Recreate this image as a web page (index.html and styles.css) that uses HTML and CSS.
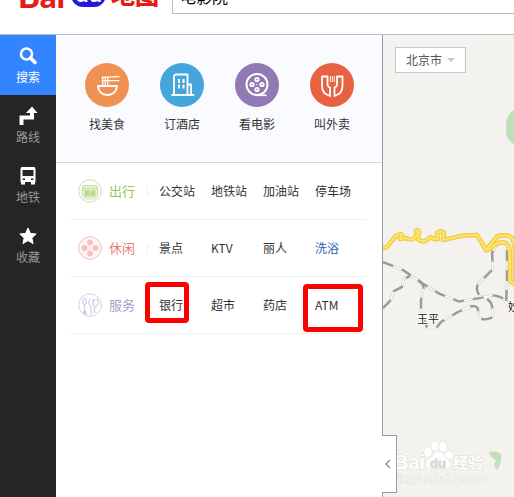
FILE: index.html
```html
<!DOCTYPE html>
<html lang="zh-CN">
<head>
<meta charset="utf-8">
<title>百度地图</title>
<link rel="stylesheet" href="styles.css">
</head>
<body>
<header class="header">
  <a class="logo" href="#" aria-label="百度地图">
    <span class="logo-latin">Bai</span>
    <span class="logo-paw">du</span>
    <span class="logo-cn">地图</span>
  </a>
  <input class="search" type="text" aria-label="搜索地点" value="电影院">
</header>
<div class="main">
  <nav class="sidebar">
    <a class="side-item active" href="#">
      <svg class="side-icon" viewBox="0 0 20 20"><circle cx="8.500" cy="8" r="5.500" fill="none" stroke="#fff" stroke-width="2.600"/><path d="M12.500 12L17 16.500" stroke="#fff" stroke-width="3.600" stroke-linecap="round"/></svg>
      <span>搜索</span>
    </a>
    <a class="side-item" href="#">
      <svg class="side-icon" viewBox="0 0 20 20"><path d="M3.500 19V11.500H14V6" fill="none" stroke="#fff" stroke-width="4"/><path d="M8 7L14 .500 19.500 7z" fill="#fff"/></svg>
      <span>路线</span>
    </a>
    <a class="side-item" href="#">
      <svg class="side-icon" viewBox="0 0 20 20"><path fill="#fff" fill-rule="evenodd" d="M4 1h12q1.500 0 1.500 2v13H2.500V3Q2.500 1 4 1zM4.500 4v6h11V4zM4.500 12.500v1.500h2.500v-1.500zM13 12.500v1.500h2.500v-1.500z"/><path d="M3 15h4v3.500H3zM13 15h4v3.500h-4z" fill="#fff"/></svg>
      <span>地铁</span>
    </a>
    <a class="side-item" href="#">
      <svg class="side-icon" viewBox="0 0 20 20"><path fill="#fff" stroke="#fff" stroke-linejoin="round" d="M10 2l2.400 5.400 5.800.600-4.400 3.900 1.300 5.700L10 14.600l-5.100 3 1.300-5.700L1.800 8l5.800-.600z"/></svg>
      <span>收藏</span>
    </a>
  </nav>
  <section class="panel">
    <div class="quick">
      <a class="quick-item" href="#">
        <svg class="quick-icon" viewBox="0 0 44 44"><circle cx="22" cy="22" r="22" fill="#f09053"/><g fill="none" stroke="#fff" stroke-width="1.600" stroke-linecap="round" stroke-linejoin="round"><path d="M13 23H32Q31 32 22.500 32 14 32 13 23z" stroke-width="2"/><path d="M17 14.300l17-.600M17 17.600h17M17.800 14v9M20.300 14v9M22.800 14v9" stroke-width="1.200"/></g></svg>
        <span>找美食</span>
      </a>
      <a class="quick-item" href="#">
        <svg class="quick-icon" viewBox="0 0 44 44"><circle cx="22" cy="22" r="22" fill="#46a5da"/><g fill="none" stroke="#fff" stroke-width="1.800" stroke-linejoin="round" stroke-linecap="round"><path d="M12 32H33.500M14 32V12.500L15.500 11.500H27.500V32M27.500 21.500H31V32"/></g><path d="M18 16h2v4h-2zM22.500 16h2v4h-2zM18 21.500h2v4h-2zM22.500 21.500h2v4h-2z" fill="#fff"/></svg>
        <span>订酒店</span>
      </a>
      <a class="quick-item" href="#">
        <svg class="quick-icon" viewBox="0 0 44 44"><circle cx="22" cy="22" r="22" fill="#9279b3"/><g fill="none" stroke="#fff"><circle cx="22" cy="21.500" r="10.500" stroke-width="2"/><path d="M22 32.300h9.500" stroke-width="1.600"/></g><g fill="#fff"><circle cx="22" cy="16.500" r="2.600"/><circle cx="22" cy="26.500" r="2.600"/><circle cx="17" cy="21.500" r="2.600"/><circle cx="27" cy="21.500" r="2.600"/><circle cx="22" cy="21.500" r=".7"/></g><g fill="#9279b3"><circle cx="22" cy="16.500" r=".8"/><circle cx="22" cy="26.500" r=".8"/><circle cx="17" cy="21.500" r=".8"/><circle cx="27" cy="21.500" r=".8"/></g></svg>
        <span>看电影</span>
      </a>
      <a class="quick-item" href="#">
        <svg class="quick-icon" viewBox="0 0 44 44"><circle cx="22" cy="22" r="22" fill="#e86242"/><g fill="none" stroke="#fff" stroke-width="1.800" stroke-linejoin="round"><path d="M12 13.500h5.500v8q0 2 2.500 3v8.500Q12 31 12 23z"/><path d="M32.500 13.500H27v8q0 2-2.500 3v8.500q8-2 8-10z"/></g><path d="M20.300 13v6M22.300 13v6M24.300 13v6" stroke="#fff" stroke-width="1"/></svg>
        <span>叫外卖</span>
      </a>
    </div>
    <div class="groups">
      <div class="group">
        <svg class="group-icon" viewBox="0 0 24 24"><circle cx="12" cy="12" r="11.300" fill="#fff" stroke="#cfdfb0"/><rect x="4.500" y="6.500" width="15" height="11.500" rx="1.500" fill="#e9f1d8" stroke="#c9dca3"/><path d="M5 9.500h14" stroke="#c9dca3"/><path d="M6.500 11h5v6h-5zM12.500 11h5v6h-5z" fill="#bfd78f"/><path d="M6 21q1-2 3-1.500M18 21q-1-2-3-1.500M9 20h6" fill="none" stroke="#cfdfb0"/></svg>
        <h2 class="group-name travel">出行</h2>
        <span class="divider"></span>
        <div class="links"><a href="#">公交站</a><a href="#">地铁站</a><a href="#">加油站</a><a href="#">停车场</a></div>
      </div>
      <div class="group">
        <svg class="group-icon" viewBox="0 0 24 24"><circle cx="12" cy="12" r="11.300" fill="#fff5f5" stroke="#f5bfc0"/><g fill="#f6bfc0"><circle cx="12" cy="6.500" r="2.900"/><circle cx="12" cy="17.500" r="2.900"/><circle cx="6.500" cy="12" r="2.900"/><circle cx="17.500" cy="12" r="2.900"/><circle cx="12" cy="12" r=".8"/></g></svg>
        <h2 class="group-name leisure">休闲</h2>
        <span class="divider"></span>
        <div class="links"><a href="#">景点</a><a href="#">KTV</a><a href="#">丽人</a><a class="hot" href="#">洗浴</a></div>
      </div>
      <div class="group">
        <svg class="group-icon" viewBox="0 0 24 24"><circle cx="12" cy="12" r="11.300" fill="#fff" stroke="#ced2e5"/><g fill="none" stroke="#c9cee3" stroke-width="1.200"><ellipse cx="6.500" cy="8.500" rx="1.800" ry="3"/><path d="M6.500 11.500v7M12 6q-3 5 1 7v9M15 6v5M17.500 6q-5 4-1 7v7M18.500 6q4 4-1 8"/></g><path d="M5 18h3.500v4L5 20z" fill="#c3c9e0"/></svg>
        <h2 class="group-name service">服务</h2>
        <span class="divider"></span>
        <div class="links"><a href="#">银行</a><a href="#">超市</a><a href="#">药店</a><a href="#">ATM</a></div>
      </div>
    </div>
    <span class="mark mark-bank"></span>
    <span class="mark mark-atm"></span>
  </section>
  <section class="map">
    <svg class="map-canvas" viewBox="383 35 131 462" preserveAspectRatio="xMinYMin slice" aria-hidden="true">
      <defs>
        <g id="rail">
          <path d="M383 262L393 266 403 270 420 282 440 294 459 301.500 480 298 492 295.500Q503 296 506 302L511 309"/>
          <path d="M383 308L390 301 394 291 402 287 404 279 410 276"/>
          <path d="M418 280Q425 284 423 290L421 300 421 312 427 327 437 327 441 322 458 312 472 306Q478 306 478 310L479 317Q482 321 491 318 495 315 491 303 488 298 480 296 475 290 478 284L493 269 492 253 497 245"/>
          <path d="M507 250V283L506 304"/>
        </g>
        <g id="road">
          <path d="M383 248Q388 248 390 243L396 236Q401 233 402 235L400 239 407 238Q409 241 415 238 417 235 416 231 418 229 419 232L418 239Q422 243 427 240L431 237Q434 240 438 239L437 233Q441 230 444 233L443 240 463 235.500 477 235 486 250 497 236.500Q507 234 511 237 514 240 515 250V284"/>
          <path d="M486 250Q490 250 493 246 499 241 506 243 510 246 510 256V281L515 284"/>
        </g>
      </defs>
      <path d="M520 107q-13 4-14 17v9q1 10 14 13z" fill="#c1dfb9"/>
      <path d="M489 452q10-2 12 3 1 6-3 14-3 0-4-4l2-5-5-3z" fill="#c1dfb9"/>
      <g fill="none" stroke-linejoin="round">
        <use href="#rail" stroke="#c9c9c7" stroke-width="2.600"/>
        <use href="#rail" stroke="#fff" stroke-width="1.400"/>
        <use href="#rail" stroke="#999" stroke-width="2.200" stroke-dasharray="11 9"/>
        <use href="#road" stroke="#efca48" stroke-width="4.600"/>
        <use href="#road" stroke="#ffe566" stroke-width="2.200"/>
      </g>
      <g class="town"><text x="417" y="323">王平</text><text x="508" y="311">妙</text></g>
      <g class="watermark">
        <g><ellipse cx="428" cy="452" rx="4" ry="5"/><ellipse cx="435" cy="446" rx="4" ry="5"/><ellipse cx="443" cy="447" rx="4" ry="5"/><ellipse cx="449" cy="455" rx="4" ry="4"/><path d="M438 452q5 0 7 5 6 4 5 9-2 5-12 3-13 2-12-6 1-4 6-6 2-5 6-5z"/></g>
        <text class="wm-name" x="394" y="469">Bai</text><text class="wm-du" x="430" y="468">du</text><text class="wm-cn" x="453" y="468">经验</text>
        <text class="wm-url" x="396" y="482">jingyan.baidu.com</text>
      </g>
    </svg>
    <button class="city" type="button">北京市<span class="caret"></span></button>
    <button class="collapse" type="button" aria-label="收起"><svg viewBox="0 0 6 10"><path d="M5 1L1 5l4 4" fill="none" stroke="#8597b5" stroke-width="1.500"/></svg></button>
  </section>
</div>
</body>
</html>
```
FILE: styles.css
```css
* { box-sizing: border-box; }
body {
  margin: 0;
  min-height: 100vh;
  display: flex;
  flex-direction: column;
  background: #fff;
  color: #333;
  font: 12px/16px "Noto Sans CJK SC", sans-serif;
  overflow: hidden;
}
a { color: inherit; text-decoration: none; }
button { font: inherit; cursor: pointer; }

.header {
  display: flex;
  align-items: flex-end;
  height: 35px;
  flex: none;
  padding-left: 18px;
  border-bottom: 1px solid #b5bcc5;
  overflow: hidden;
}
.logo {
  display: flex;
  align-items: flex-end;
  width: 154px;
  height: 60px;
  padding-bottom: 27px;
  flex: none;
  color: #e51c14;
  line-height: 24px;
  white-space: nowrap;
}
.logo-latin {
  width: 49px;
  margin-bottom: -4px;
  font: 900 33px/32px Lato, sans-serif;
}
.logo-paw {
  width: 35px;
  height: 28px;
  margin: 0 5px 0 4px;
  border-radius: 12px;
  background: #2318dc;
  color: #fff;
  font: 700 24px/28px Lato, sans-serif;
  text-align: center;
}
.logo-cn { font-size: 24px; font-weight: 900; margin-bottom: 1px; }
.search {
  flex: 1;
  min-width: 0;
  height: 34px;
  margin: 0 -2px 20px 0;
  padding: 0 7px 2px;
  border: 1px solid #bbb;
  background: #fff;
  color: #000;
  font: 16px/24px "Noto Sans CJK SC", sans-serif;
}

.main { flex: 1; display: flex; }
.sidebar { width: 56px; flex: none; background: #252525; color: #999; }
.side-item {
  display: flex;
  flex-direction: column;
  align-items: center;
  gap: 3px;
  height: 60px;
  padding-top: 11px;
}
.side-item.active { background: #3385ff; color: #fff; }
.side-icon { width: 20px; height: 20px; }

.panel {
  position: relative;
  width: 327px;
  flex: none;
  border-right: 1px solid #999ca0;
}
.quick {
  display: flex;
  gap: 31px;
  height: 128px;
  padding: 28px 29px 0;
  border-bottom: 1px solid #d5dae1;
  background: #fafbff;
}
.quick-item {
  display: flex;
  flex-direction: column;
  align-items: center;
  gap: 9px;
  width: 44px;
}
.quick-icon { width: 44px; height: 44px; }
.groups { padding: 0 15px; }
.group {
  display: flex;
  align-items: center;
  height: 57px;
  padding-left: 7px;
  border-bottom: 1px solid #f0f1f4;
}
.group-icon { width: 24px; height: 24px; }
.group-name {
  width: 38px;
  margin: 0 0 0 7px;
  font-size: 13px;
  font-weight: 400;
}
.travel { color: #9bc455; }
.leisure { color: #e77c7c; }
.service { color: #9da4c8; }
.divider { width: 1px; height: 11px; background: #eceef2; }
.links {
  display: grid;
  grid-template-columns: repeat(4, 52px);
  padding-left: 11px;
  white-space: nowrap;
}
.hot { color: #2460b2; }
.mark {
  position: absolute;
  border: 5px solid #f00;
  border-radius: 4px;
  pointer-events: none;
}
.mark-bank { left: 89px; top: 247px; width: 44px; height: 41px; }
.mark-atm { left: 247px; top: 249px; width: 60px; height: 48px; }

.map {
  position: relative;
  flex: 1;
  min-width: 0;
  padding: 12px;
  background: #f4f2ee;
}
.map-canvas {
  position: absolute;
  inset: 0;
  width: 100%;
  height: 100%;
}
.city {
  position: relative;
  display: flex;
  align-items: center;
  gap: 5px;
  height: 26px;
  padding: 0 10px;
  border: 1px solid #c3c6cc;
  background: #fff;
  color: #555;
}
.caret {
  border: 4px solid transparent;
  border-top-color: #c5c9d2;
  border-bottom: 0;
}
.collapse {
  position: absolute;
  left: -1px;
  bottom: 4px;
  width: 15px;
  height: 58px;
  padding: 0 0 0 3px;
  border: 1px solid #999ca0;
  border-left: 0;
  background: #fff;
  text-align: left;
}
.collapse svg { width: 6px; height: 10px; display: block; }
.town {
  fill: #222;
  stroke: #fff;
  stroke-width: 2px;
  paint-order: stroke;
  font-size: 11px;
}
.watermark {
  fill: #fff;
  stroke: #dcdad6;
  stroke-width: 1px;
  paint-order: stroke;
  font-family: "Liberation Sans", "Noto Sans CJK SC", sans-serif;
}
.wm-name { font-size: 20px; font-weight: 700; }
.wm-du { font-size: 13px; font-weight: 700; fill: #dcdad6; }
.wm-cn { font-size: 15px; font-weight: 700; }
.wm-url { font-size: 11px; }
```
